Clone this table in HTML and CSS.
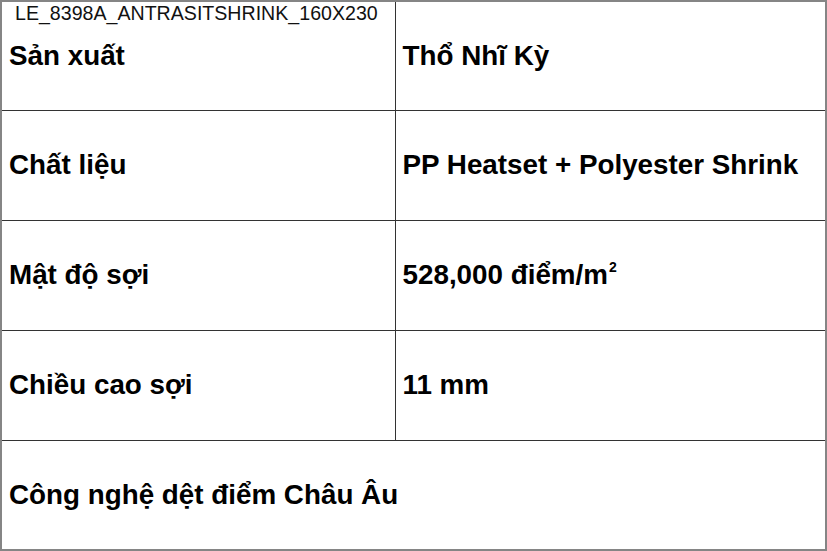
FILE: index.html
```html
<!DOCTYPE html>
<html lang="vi">
<head>
<meta charset="utf-8">
<title>LE_8398A_ANTRASITSHRINK_160X230</title>
<link rel="stylesheet" href="styles.css">
</head>
<body>
<div class="sheet">
  <div class="code">LE_8398A_ANTRASITSHRINK_160X230</div>
  <table class="specs">
    <colgroup><col class="c1"><col class="c2"></colgroup>
    <tr class="first"><td>Sản xuất</td><td>Thổ Nhĩ Kỳ</td></tr>
    <tr><td>Chất liệu</td><td>PP Heatset + Polyester Shrink</td></tr>
    <tr><td>Mật độ sợi</td><td>528,000 điểm/m<sup>2</sup></td></tr>
    <tr><td>Chiều cao sợi</td><td>11 mm</td></tr>
    <tr class="last"><td colspan="2">Công nghệ dệt điểm Châu Âu</td></tr>
  </table>
</div>
</body>
</html>
```

FILE: styles.css
```css
html, body {
  margin: 0;
  padding: 0;
  background: #fff;
}
.sheet {
  position: relative;
  width: 827px;
  height: 551px;
  overflow: hidden;
  font-family: "Liberation Sans", Arial, sans-serif;
  color: #000;
}
.code {
  position: absolute;
  left: 15px;
  top: 2px;
  font-size: 19.6px;
  line-height: 22px;
  color: #111;
}
.specs {
  width: 827px;
  border-collapse: collapse;
  table-layout: fixed;
  border: 2px solid #858585;
}
.c1 { width: 394px; }
.specs tr { height: 110px; }
.specs tr.first { height: 109px; }
.specs tr.last { height: 110px; }
.specs td {
  padding: 0 0 0 7px;
  border: 1px solid #333;
  font-size: 27.8px;
  font-weight: bold;
  vertical-align: middle;
  line-height: 32px;
  white-space: nowrap;
}
.specs tr:first-child td { border-top: 2px solid #858585; }
.specs tr:last-child td { border-bottom: 2px solid #858585; }
.specs td:first-child { border-left: 2px solid #858585; }
.specs td:last-child { border-right: 2px solid #858585; }
.specs sup {
  font-size: 14px;
  line-height: 0;
  vertical-align: 12px;
  margin-left: 1px;
}
```
